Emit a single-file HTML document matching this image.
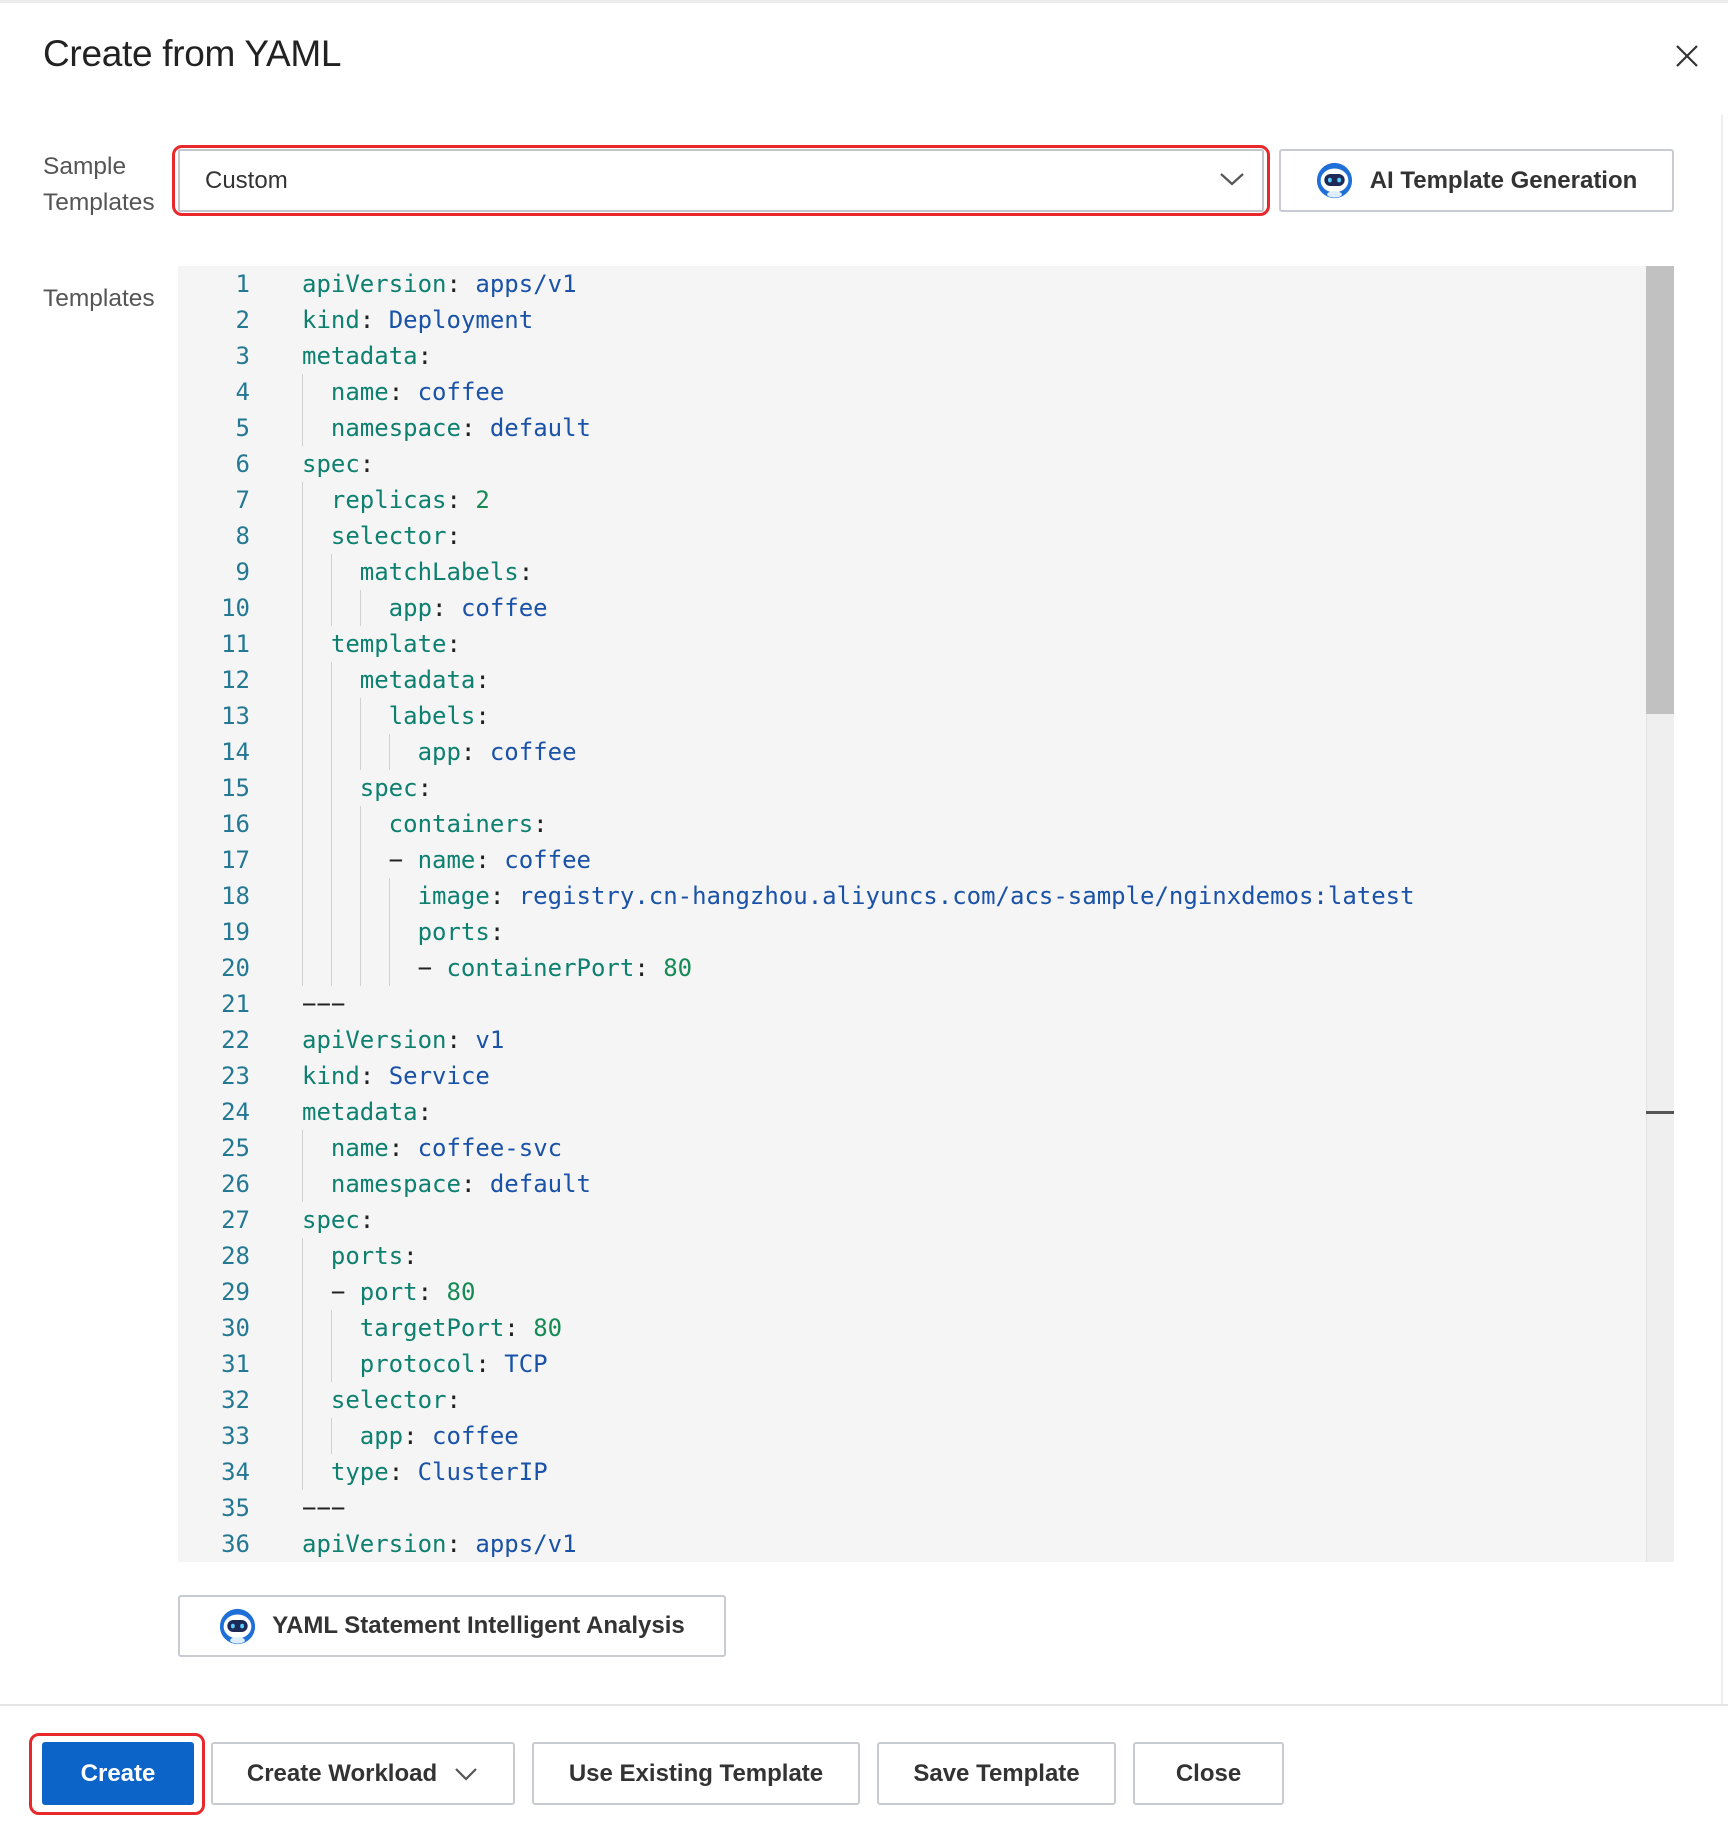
<!DOCTYPE html>
<html><head><meta charset="utf-8"><style>
*{box-sizing:border-box;margin:0;padding:0}
body{width:1728px;height:1828px;background:#fff;position:relative;overflow:hidden;font-family:"Liberation Sans",sans-serif;color:#333}
.abs{position:absolute}
.title{left:43px;top:33px;font-size:37px;color:#222;letter-spacing:-0.3px}
.lbl{font-size:24.5px;color:#555;line-height:36px}
.btn{position:absolute;border:2px solid #c8ccd2;border-radius:3px;background:#fff;display:flex;align-items:center;justify-content:center;font-size:24px;font-weight:bold;color:#333}
.ed{left:178px;top:266px;width:1496px;height:1296px;background:#f5f5f5;overflow:hidden}
.ln{position:absolute;left:0;width:72px;text-align:right;color:#237893}
.code{font-family:"DejaVu Sans Mono","Liberation Mono",monospace;font-size:24px;line-height:36px;white-space:pre}
.row{position:absolute;left:0;height:36px;width:1460px}
.c{position:absolute;left:124px;top:0;display:flex;white-space:pre}
.g{display:inline-block;width:28.9px;height:36px;border-left:1.5px solid #d0d0d0}
.k{color:#0e8070}.v{color:#1a52a8}.n{color:#168a54}.p{color:#222}
</style></head><body>
<div class="abs" style="left:0;top:0;width:1728px;height:3px;background:#ececec"></div>
<div class="abs" style="left:1721px;top:115px;width:2px;height:1590px;background:#eee"></div>
<div class="abs title">Create from YAML</div>
<svg class="abs" style="left:1675px;top:44px" width="24" height="24" viewBox="0 0 24 24"><path d="M2 2L22 22M22 2L2 22" stroke="#333" stroke-width="2.2"/></svg>

<div class="abs lbl" style="left:43px;top:149px">Sample<br>Templates</div>
<div class="abs lbl" style="left:43px;top:281px">Templates</div>

<div class="abs" style="left:172px;top:145px;width:1098px;height:71px;border:3px solid #e8282a;border-radius:10px"></div>
<div class="abs" style="left:178px;top:149px;width:1086px;height:63px;border:2px solid #c3c7cd;border-radius:2px;background:#fff;font-size:24px;color:#333;padding-left:25px;line-height:59px">Custom</div>
<svg class="abs" style="left:1219px;top:171px" width="26" height="16" viewBox="0 0 26 16"><path d="M2 3L13 13L24 3" fill="none" stroke="#555" stroke-width="2.2"/></svg>

<svg width="0" height="0" style="position:absolute"><defs><symbol id="bot" viewBox="0 0 40 40"><circle cx="20" cy="20" r="19" fill="#1f6fd8"/><ellipse cx="20" cy="20" rx="15" ry="13" fill="#fff"/><rect x="9" y="13" width="22" height="13" rx="6.5" fill="#1d2a58"/><rect x="13" y="17" width="4" height="5" rx="2" fill="#5ad0ff"/><rect x="23" y="17" width="4" height="5" rx="2" fill="#5ad0ff"/><ellipse cx="20" cy="35" rx="8" ry="3.5" fill="#dceeff"/></symbol></defs></svg>

<div class="btn" style="left:1279px;top:149px;width:395px;height:63px"><svg width="37" height="37" style="margin-right:17px"><use href="#bot"/></svg>AI Template Generation</div>

<div class="abs ed code">
<div class="abs" style="left:1468px;top:0;width:28px;height:1296px;background:#efefef;border-left:1px solid #e2e2e2"></div>
<div class="abs" style="left:1468px;top:0;width:28px;height:448px;background:#c1c1c1"></div>
<div class="abs" style="left:1468px;top:845px;width:28px;height:3px;background:#555"></div>
<div id="lines"></div>
</div>

<div class="btn" style="left:178px;top:1595px;width:548px;height:62px"><svg width="37" height="37" style="margin-right:16px"><use href="#bot"/></svg>YAML Statement Intelligent Analysis</div>

<div class="abs" style="left:0;top:1704px;width:1728px;height:2px;background:#e6e6e6"></div>

<div class="abs" style="left:29px;top:1733px;width:176px;height:82px;border:3px solid #e8282a;border-radius:10px"></div>
<div class="btn" style="left:42px;top:1742px;width:152px;height:63px;background:#0c64c9;border-color:#0c64c9;color:#fff">Create</div>
<div class="btn" style="left:211px;top:1742px;width:304px;height:63px">Create Workload<svg width="26" height="16" viewBox="0 0 26 16" style="margin-left:16px"><path d="M3 3L13 13L23 3" fill="none" stroke="#555" stroke-width="2.2"/></svg></div>
<div class="btn" style="left:532px;top:1742px;width:328px;height:63px">Use Existing Template</div>
<div class="btn" style="left:877px;top:1742px;width:239px;height:63px">Save Template</div>
<div class="btn" style="left:1133px;top:1742px;width:151px;height:63px">Close</div>

<script>
var L=[[0,'k:apiVersion','v:apps/v1'],[0,'k:kind','v:Deployment'],[0,'k:metadata'],[1,'k:name','v:coffee'],[1,'k:namespace','v:default'],[0,'k:spec'],[1,'k:replicas','n:2'],[1,'k:selector'],[2,'k:matchLabels'],[3,'k:app','v:coffee'],[1,'k:template'],[2,'k:metadata'],[3,'k:labels'],[4,'k:app','v:coffee'],[2,'k:spec'],[3,'k:containers'],[3,'d:name','v:coffee'],[4,'k:image','v:registry.cn-hangzhou.aliyuncs.com/acs-sample/nginxdemos:latest'],[4,'k:ports'],[4,'d:containerPort','n:80'],[0,'---'],[0,'k:apiVersion','v:v1'],[0,'k:kind','v:Service'],[0,'k:metadata'],[1,'k:name','v:coffee-svc'],[1,'k:namespace','v:default'],[0,'k:spec'],[1,'k:ports'],[1,'d:port','n:80'],[2,'k:targetPort','n:80'],[2,'k:protocol','v:TCP'],[1,'k:selector'],[2,'k:app','v:coffee'],[1,'k:type','v:ClusterIP'],[0,'---'],[0,'k:apiVersion','v:apps/v1']];
var h='';
L.forEach(function(l,i){
 var s='<div class="row" style="top:'+(i*36)+'px"><span class="ln">'+(i+1)+'</span><span class="c">';
 for(var j=0;j<l[0];j++)s+='<span class="g"></span>';
 if(l[1]=='---'){s+='<span class="p">&#8722;&#8722;&#8722;</span>';}
 else{
  var t=l[1].split(':'),key=t[1];
  if(t[0]=='d')s+='<span class="p">&#8722;&nbsp;</span>';
  s+='<span class="k">'+key+'</span><span class="p">:&nbsp;</span>';
  if(l[2]){var v=l[2].split(':');s+='<span class="'+v[0]+'">'+l[2].slice(2)+'</span>';}
 }
 s+='</span></div>';h+=s;
});
document.getElementById('lines').innerHTML=h;
</script>
</body></html>
